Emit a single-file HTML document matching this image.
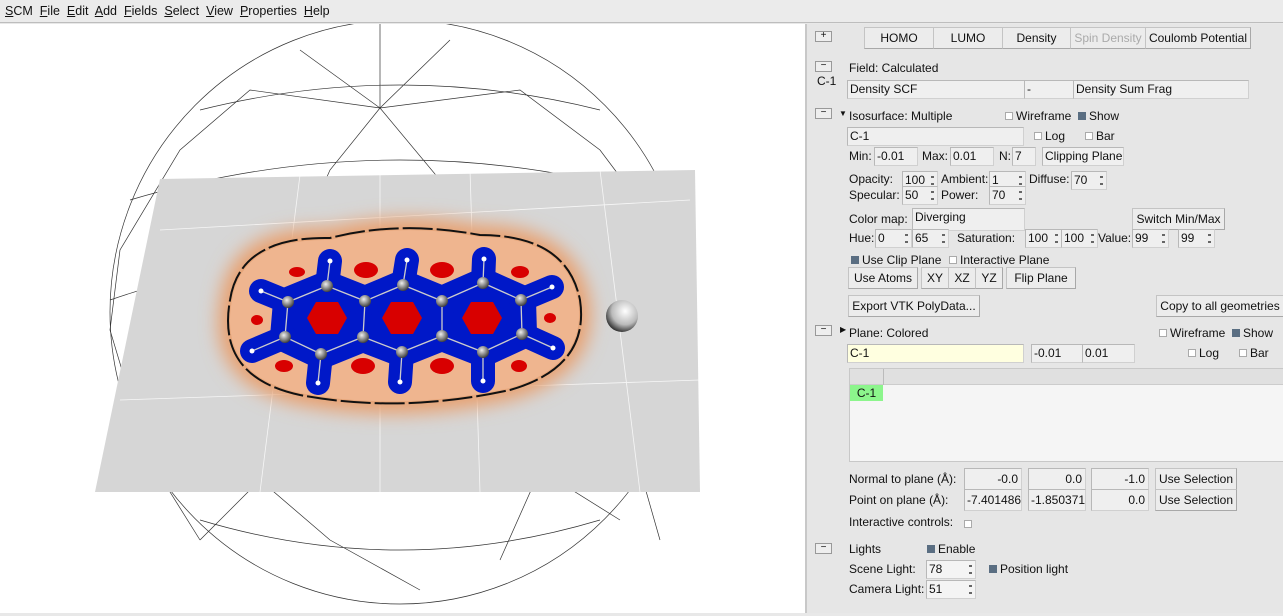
<!DOCTYPE html>
<html><head><meta charset="utf-8">
<style>
*{box-sizing:border-box;margin:0;padding:0}
body{width:1283px;height:613px;overflow:hidden;background:#e8e8e8;font-family:"Liberation Sans",sans-serif;font-size:12px;color:#111;position:relative}
.a{position:absolute;white-space:nowrap}
#menu{left:0;top:0;width:1283px;height:23px;background:#ebebeb;border-bottom:1px solid #bdbdbd;font-size:12.5px}
#menu span{margin-right:3.5px}
#menu u{text-decoration:underline}
#view{left:0;top:24px;width:805px;height:589px;background:#fff}
#panel{left:805px;top:24px;width:478px;height:589px;background:#e6e6e6;border-left:2px solid #c8c8c8}
.btn{position:absolute;background:#ececec;border:1px solid #c4c4c4;border-right-color:#a8a8a8;border-bottom-color:#a8a8a8;text-align:center;line-height:20px;height:22px}
.fld{position:absolute;background:#efefef;border:1px solid #d0d0d0;border-top-color:#b8b8b8;border-left-color:#b8b8b8;height:19px;line-height:17px;padding-left:2px}
.pm{position:absolute;width:17px;height:11px;border:1px solid #999;background:#eee;font-size:10px;line-height:8px;text-align:center}
.cb{display:inline-block;width:8px;height:8px;border:1px solid #aaa;background:#fff;margin-right:3px;vertical-align:0}
.cb.on{background:#5a6e82;border-color:#5a6e82}
.sp::after{content:"";position:absolute;right:3px;top:4px;width:3px;height:9px;background:linear-gradient(#666 0 2px,transparent 2px 7px,#666 7px)}
</style></head><body>
<div class="a" id="menu"><div style="position:absolute;left:5px;top:4px"><span><u>S</u>CM</span> <span><u>F</u>ile</span> <span><u>E</u>dit</span> <span><u>A</u>dd</span> <span><u>F</u>ields</span> <span><u>S</u>elect</span> <span><u>V</u>iew</span> <span><u>P</u>roperties</span> <span><u>H</u>elp</span></div></div>
<div class="a" id="view">
<svg width="805" height="589" viewBox="0 24 805 589">
<defs>
<filter id="bl" x="-50%" y="-50%" width="200%" height="200%"><feGaussianBlur stdDeviation="9"/></filter>
<radialGradient id="ball" cx="0.6" cy="0.35" r="0.7"><stop offset="0" stop-color="#fff"/><stop offset="0.6" stop-color="#bbb"/><stop offset="1" stop-color="#222"/></radialGradient>
<radialGradient id="at" cx="0.4" cy="0.35" r="0.7"><stop offset="0" stop-color="#eee"/><stop offset="1" stop-color="#333"/></radialGradient>
</defs>
<g fill="none" stroke="#333" stroke-width="0.7">
<ellipse cx="400" cy="312" rx="290" ry="292"/>
<path d="M110 300 Q400 200 690 300 M130 200 Q400 120 670 200 M200 110 Q400 60 600 110 M130 410 Q400 500 670 410 M200 520 Q400 580 600 520 M380 108 L250 90 L180 150 L120 250 L110 330 L140 430 M380 108 L520 90 L600 150 L660 230 M380 108 L300 50 M380 108 L450 40 M380 108 L330 170 L290 260 M380 108 L440 180 L470 260 M380 108 L380 20 M200 540 L260 480 L330 540 L420 590 M500 560 L540 470 L620 520 M150 460 L200 540 M640 470 L660 540"/>
</g>
<polygon points="160,179 695,170 700,492 95,492" fill="#d6d6d6"/>
<g fill="none" stroke="#fff" stroke-width="0.8" opacity="0.8">
<path d="M380 170 L380 492 M470 170 L480 492 M300 175 L260 492 M600 170 L640 492 M160 230 L690 200 M120 400 L700 380"/>
</g>
<path filter="url(#bl)" fill="#e8a070" d="M220 300 Q230 225 330 228 Q400 210 480 225 Q575 225 590 300 Q600 375 510 400 Q400 425 300 405 Q205 385 220 300"/>
<path fill="#efb58f" d="M232 300 Q242 238 330 240 Q400 222 480 237 Q565 237 578 300 Q588 365 510 388 Q400 412 300 393 Q218 375 232 300"/>
<g stroke="#111" stroke-width="2" fill="none" stroke-dasharray="30 4">
<path d="M230 300 Q240 236 330 238 Q400 220 480 235 Q567 235 580 300 Q590 367 510 390 Q400 414 300 395 Q216 377 230 300"/>
</g>
<g stroke="#0018c8" stroke-width="30" stroke-linecap="round" stroke-linejoin="round" fill="#0018c8">
<path d="M327 286 L365 301 L403 285 L442 301 L483 283 L521 300 L522 334 L483 352 L442 336 L402 352 L363 337 L321 354 L285 337 L288 302 Z"/>
<path fill="none" d="M327 286 L330 261 M288 302 L261 291 M285 337 L252 351 M321 354 L318 383 M402 352 L400 382 M483 352 L483 381 M522 334 L553 348 M521 300 L552 287 M483 283 L484 259 M403 285 L407 260" stroke-width="24"/>
</g>
<g fill="#d80000">
<polygon points="307,318 316,302 338,302 347,318 338,334 316,334"/>
<polygon points="382,318 391,302 413,302 422,318 413,334 391,334"/>
<polygon points="462,318 471,302 493,302 502,318 493,334 471,334"/>
<ellipse cx="366" cy="270" rx="12" ry="8"/><ellipse cx="442" cy="270" rx="12" ry="8"/><ellipse cx="520" cy="272" rx="9" ry="6"/>
<ellipse cx="363" cy="366" rx="12" ry="8"/><ellipse cx="442" cy="366" rx="12" ry="8"/><ellipse cx="284" cy="366" rx="9" ry="6"/>
<ellipse cx="297" cy="272" rx="8" ry="5"/><ellipse cx="257" cy="320" rx="6" ry="5"/><ellipse cx="550" cy="318" rx="6" ry="5"/><ellipse cx="519" cy="366" rx="8" ry="6"/>
</g>
<g stroke="#ccc" stroke-width="1.3" fill="none">
<path d="M327 286 L365 301 L403 285 L442 301 L483 283 L521 300 L522 334 L483 352 L442 336 L402 352 L363 337 L321 354 L285 337 L288 302 Z M365 301 L363 337 M442 301 L442 336 M327 286 L330 261 M288 302 L261 291 M285 337 L252 351 M321 354 L318 383 M402 352 L400 382 M483 352 L483 381 M522 334 L553 348 M521 300 L552 287 M483 283 L484 259 M403 285 L407 260"/>
</g>
<g fill="url(#at)">
<circle cx="327" cy="286" r="6"/><circle cx="365" cy="301" r="6"/><circle cx="403" cy="285" r="6"/><circle cx="442" cy="301" r="6"/><circle cx="483" cy="283" r="6"/><circle cx="521" cy="300" r="6"/><circle cx="522" cy="334" r="6"/><circle cx="483" cy="352" r="6"/><circle cx="442" cy="336" r="6"/><circle cx="402" cy="352" r="6"/><circle cx="363" cy="337" r="6"/><circle cx="321" cy="354" r="6"/><circle cx="285" cy="337" r="6"/><circle cx="288" cy="302" r="6"/>
</g>
<g fill="#fff"><circle cx="330" cy="261" r="2.5"/><circle cx="261" cy="291" r="2.5"/><circle cx="252" cy="351" r="2.5"/><circle cx="318" cy="383" r="2.5"/><circle cx="400" cy="382" r="2.5"/><circle cx="483" cy="381" r="2.5"/><circle cx="553" cy="348" r="2.5"/><circle cx="552" cy="287" r="2.5"/><circle cx="484" cy="259" r="2.5"/><circle cx="407" cy="260" r="2.5"/></g>
<circle cx="622" cy="316" r="16" fill="url(#ball)"/>
</svg>
</div>
<div class="a" id="panel">
<div class="pm" style="left:8px;top:7px">+</div>
<div class="btn" style="left:57px;top:3px;width:70px">HOMO</div>
<div class="btn" style="left:126px;top:3px;width:70px">LUMO</div>
<div class="btn" style="left:195px;top:3px;width:69px">Density</div>
<div class="btn" style="left:263px;top:3px;width:76px;color:#aaa">Spin Density</div>
<div class="btn" style="left:338px;top:3px;width:106px">Coulomb Potential</div>
<div class="pm" style="left:8px;top:37px">−</div>
<div class="a" style="left:10px;top:50px">C-1</div>
<div class="a" style="left:42px;top:37px">Field: Calculated</div>
<div class="fld" style="left:40px;top:56px;width:178px">Density SCF</div>
<div class="fld" style="left:217px;top:56px;width:50px">-</div>
<div class="fld" style="left:266px;top:56px;width:176px">Density Sum Frag</div>
<div class="pm" style="left:8px;top:84px">−</div>
<div class="a" style="left:32px;top:85px;font-size:8px">▼</div>
<div class="a" style="left:42px;top:85px">Isosurface: Multiple</div>
<div class="a" style="left:198px;top:85px"><span class="cb"></span>Wireframe</div>
<div class="a" style="left:271px;top:85px"><span class="cb on"></span>Show</div>
<div class="fld" style="left:40px;top:103px;width:177px">C-1</div>
<div class="a" style="left:227px;top:105px"><span class="cb"></span>Log</div>
<div class="a" style="left:278px;top:105px"><span class="cb"></span>Bar</div>
<div class="a" style="left:42px;top:125px">Min:</div><div class="fld" style="left:67px;top:123px;width:44px">-0.01</div>
<div class="a" style="left:115px;top:125px">Max:</div><div class="fld" style="left:143px;top:123px;width:44px">0.01</div>
<div class="a" style="left:192px;top:125px">N:</div><div class="fld" style="left:205px;top:123px;width:24px">7</div>
<div class="fld" style="left:235px;top:123px;width:82px;background:#f0f0f0">Clipping Plane</div>
<div class="a" style="left:42px;top:148px">Opacity:</div><div class="fld sp" style="left:95px;top:147px;width:36px">100</div>
<div class="a" style="left:134px;top:148px">Ambient:</div><div class="fld sp" style="left:182px;top:147px;width:37px">1</div>
<div class="a" style="left:222px;top:148px">Diffuse:</div><div class="fld sp" style="left:264px;top:147px;width:36px">70</div>
<div class="a" style="left:42px;top:164px">Specular:</div><div class="fld sp" style="left:95px;top:162px;width:36px">50</div>
<div class="a" style="left:134px;top:164px">Power:</div><div class="fld sp" style="left:182px;top:162px;width:37px">70</div>
<div class="a" style="left:42px;top:188px">Color map:</div><div class="fld" style="left:105px;top:184px;width:113px;height:23px">Diverging</div>
<div class="btn" style="left:325px;top:184px;width:93px">Switch Min/Max</div>
<div class="a" style="left:42px;top:207px">Hue:</div><div class="fld sp" style="left:68px;top:205px;width:37px">0</div><div class="fld sp" style="left:105px;top:205px;width:37px">65</div>
<div class="a" style="left:150px;top:207px">Saturation:</div><div class="fld sp" style="left:218px;top:205px;width:37px">100</div><div class="fld sp" style="left:254px;top:205px;width:37px">100</div>
<div class="a" style="left:291px;top:207px">Value:</div><div class="fld sp" style="left:325px;top:205px;width:37px">99</div><div class="fld sp" style="left:371px;top:205px;width:37px">99</div>
<div class="a" style="left:44px;top:229px"><span class="cb on"></span>Use Clip Plane</div>
<div class="a" style="left:142px;top:229px"><span class="cb"></span>Interactive Plane</div>
<div class="btn" style="left:41px;top:243px;width:70px">Use Atoms</div>
<div class="btn" style="left:114px;top:243px;width:28px">XY</div>
<div class="btn" style="left:141px;top:243px;width:28px">XZ</div>
<div class="btn" style="left:168px;top:243px;width:28px">YZ</div>
<div class="btn" style="left:199px;top:243px;width:70px">Flip Plane</div>
<div class="btn" style="left:41px;top:271px;width:132px">Export VTK PolyData...</div>
<div class="btn" style="left:349px;top:271px;width:128px">Copy to all geometries</div>
<div class="pm" style="left:8px;top:301px">−</div>
<div class="a" style="left:33px;top:301px;font-size:8px">▶</div>
<div class="a" style="left:42px;top:302px">Plane: Colored</div>
<div class="a" style="left:352px;top:302px"><span class="cb"></span>Wireframe</div>
<div class="a" style="left:425px;top:302px"><span class="cb on"></span>Show</div>
<div class="fld" style="left:40px;top:320px;width:177px;background:#ffffe0">C-1</div>
<div class="fld" style="left:224px;top:320px;width:52px">-0.01</div>
<div class="fld" style="left:275px;top:320px;width:53px">0.01</div>
<div class="a" style="left:381px;top:322px"><span class="cb"></span>Log</div>
<div class="a" style="left:432px;top:322px"><span class="cb"></span>Bar</div>
<div class="a" style="left:42px;top:344px;width:436px;height:94px;background:#f5f5f5;border:1px solid #c8c8c8"></div>
<div class="a" style="left:43px;top:345px;width:435px;height:16px;background:#e0e0e0;border-bottom:1px solid #ccc"></div>
<div class="a" style="left:76px;top:345px;width:1px;height:16px;background:#bbb"></div>
<div class="a" style="left:43px;top:361px;width:33px;height:16px;background:#8cf58c;text-align:center;line-height:16px">C-1</div>
<div class="a" style="left:42px;top:448px">Normal to plane (Å):</div>
<div class="fld" style="left:157px;top:444px;width:58px;height:22px;line-height:20px;text-align:right;padding-right:3px">-0.0</div>
<div class="fld" style="left:221px;top:444px;width:58px;height:22px;line-height:20px;text-align:right;padding-right:3px">0.0</div>
<div class="fld" style="left:284px;top:444px;width:58px;height:22px;line-height:20px;text-align:right;padding-right:3px">-1.0</div>
<div class="btn" style="left:348px;top:444px;width:82px">Use Selection</div>
<div class="a" style="left:42px;top:469px">Point on plane (Å):</div>
<div class="fld" style="left:157px;top:465px;width:58px;height:22px;line-height:20px;text-align:right;padding-right:2px">-7.401486</div>
<div class="fld" style="left:221px;top:465px;width:58px;height:22px;line-height:20px;text-align:right;padding-right:2px">-1.850371</div>
<div class="fld" style="left:284px;top:465px;width:58px;height:22px;line-height:20px;text-align:right;padding-right:3px">0.0</div>
<div class="btn" style="left:348px;top:465px;width:82px">Use Selection</div>
<div class="a" style="left:42px;top:491px">Interactive controls:</div>
<div class="a" style="left:157px;top:493px"><span class="cb"></span></div>
<div class="pm" style="left:8px;top:519px">−</div>
<div class="a" style="left:42px;top:518px">Lights</div>
<div class="a" style="left:120px;top:518px"><span class="cb on"></span>Enable</div>
<div class="a" style="left:42px;top:538px">Scene Light:</div><div class="fld sp" style="left:119px;top:536px;width:50px;background:#f4f4f4">78</div>
<div class="a" style="left:182px;top:538px"><span class="cb on"></span>Position light</div>
<div class="a" style="left:42px;top:558px">Camera Light:</div><div class="fld sp" style="left:119px;top:556px;width:50px;background:#f4f4f4">51</div>
</div>
</body></html>
